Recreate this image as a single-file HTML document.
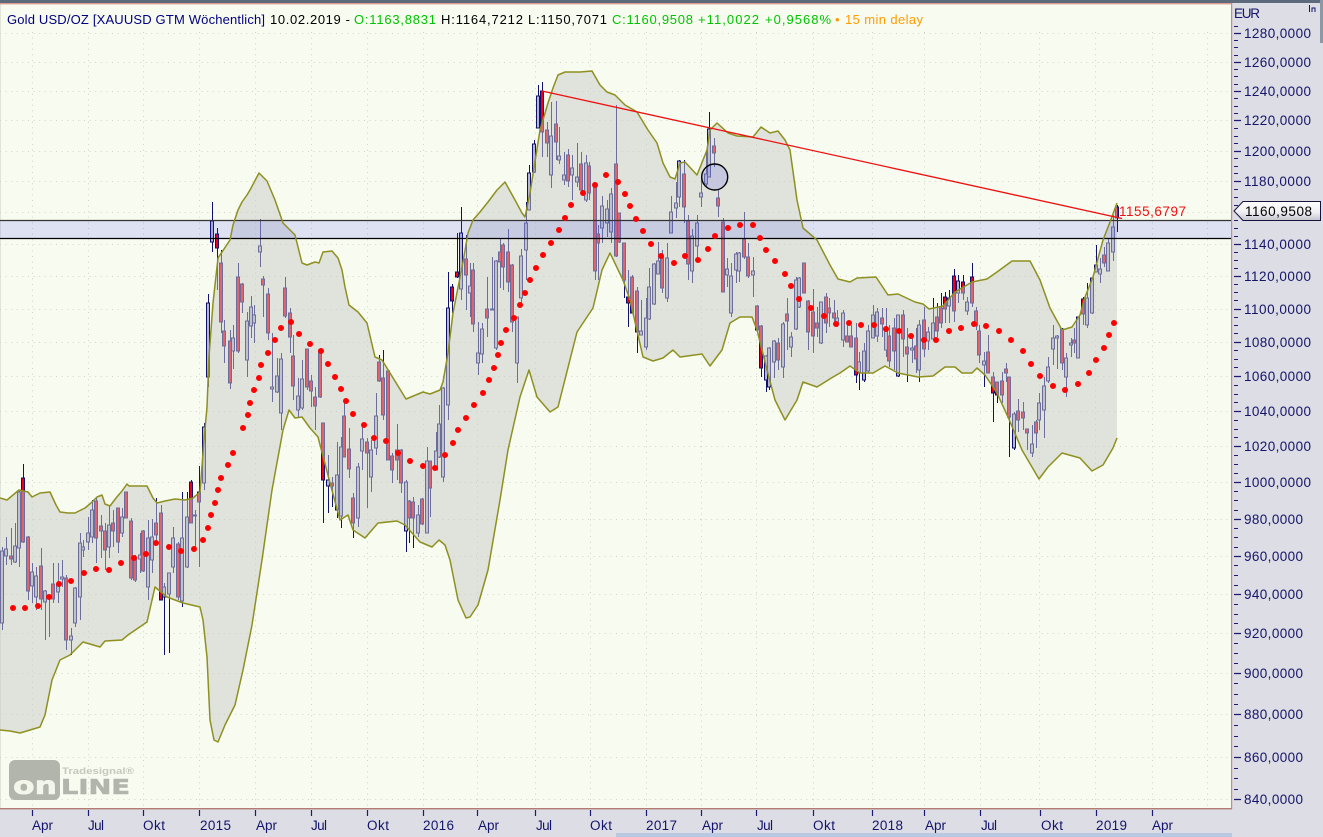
<!DOCTYPE html>
<html lang="de"><head><meta charset="utf-8"><title>Gold USD/OZ</title>
<style>html,body{margin:0;padding:0;background:#dddde5}svg{display:block}text{font-family:"Liberation Sans",sans-serif}</style></head>
<body>
<svg xmlns="http://www.w3.org/2000/svg" width="1323" height="837" viewBox="0 0 1323 837">
<rect width="1323" height="837" fill="#dddde5"/>
<rect x="616" y="833" width="616" height="4" fill="#b9c9e2"/>
<rect width="1323" height="3" fill="#5d6a7b"/>
<rect x="1320" y="0" width="3" height="43" fill="#8b98a6"/>
<rect x="0" y="4" width="1232" height="804" fill="#f8fbf0"/>
<rect x="0" y="4" width="1" height="804" fill="#e2e4da"/>
<!-- grid -->
<g stroke="#d2d4c8" stroke-width="1" stroke-dasharray="1 4.6" fill="none">
<path d="M0 33.5H1231M0 62.5H1231M0 91.5H1231M0 120.5H1231M0 151.5H1231M0 181.5H1231M0 212.5H1231M0 244.5H1231M0 276.5H1231M0 309.5H1231M0 342.5H1231M0 376.5H1231M0 411.5H1231M0 446.5H1231M0 482.5H1231M0 519.5H1231M0 556.5H1231M0 594.5H1231M0 633.5H1231M0 673.5H1231M0 714.5H1231M0 757.5H1231M0 799.5H1231"/>
<path d="M32.5 32V808M88.5 32V808M143.5 32V808M199.5 32V808M255.5 32V808M311.5 32V808M367.5 32V808M423.5 32V808M477.5 32V808M535.5 32V808M590.5 32V808M646.5 32V808M701.5 32V808M756.5 32V808M813.5 32V808M872.5 32V808M924.5 32V808M980.5 32V808M1039.5 32V808M1095.5 32V808M1152.5 32V808M1207.5 32V808"/>
</g>
<!-- logo -->
<g>
<rect x="9" y="760" width="51" height="40" rx="6" fill="#b1b5ab"/>
<text x="13" y="794" font-size="25" font-weight="700" fill="#f4f6ec" stroke="#f4f6ec" stroke-width=".6" textLength="44" lengthAdjust="spacingAndGlyphs" style="font-family:'DejaVu Sans',sans-serif">on</text>
<text x="61" y="794" font-size="20" font-weight="700" fill="#b1b5ab" stroke="#b1b5ab" stroke-width=".6" textLength="69" lengthAdjust="spacingAndGlyphs" style="font-family:'DejaVu Sans',sans-serif">LINE</text>
<text x="62" y="774" font-size="9.5" font-weight="700" fill="#c5c8bd" textLength="72" lengthAdjust="spacingAndGlyphs">Tradesignal®</text>
</g>
<!-- candles -->
<path transform="translate(.5 0)" fill="none" stroke="#10106e" stroke-width="1" d="M2 547V630M6 537V565M11 528V565M15 523V563M19 490V567M23 464V543M28 536V600M32 563V603M36 567V610M41 548V610M45 590V640M49 595V637M53 563V603M58 563V603M62 560V587M66 575V650M71 628V655M75 587V627M80 533V620M83 540V557M88 517V550M92 500V543M96 498V563M101 515V558M105 523V570M109 505V558M113 510V547M118 508V553M122 508V537M126 492V518M131 518V580M135 555V582M140 533V573M143 530V572M148 520V600M152 519V573M156 498V543M161 505V600M164 583V655M169 573V653M173 527V573M178 542V600M182 492V607M187 492V568M191 480V523M195 510V547M199 466V567M204 423V490M208 294V387M212 202V252M217 228V290M221 250V333M224 320V363M230 330V389M233 325V369M238 263V353M242 283V313M247 312V377M251 296V338M254 305V343M260 219V267M263 276V317M268 288V340M272 333V402M277 358V393M281 353V430M285 277V318M290 308V353M293 335V400M298 378V417M302 360V410M307 349V390M311 375V407M315 387V430M320 349V398M323 423V523M328 455V513M332 477V507M337 442V518M341 437V528M344 400V457M349 428V478M353 493V538M358 463V527M362 423V470M367 438V508M371 440V492M376 393V455M379 355V382M383 350V420M388 370V460M392 453V483M397 424V480M401 449V493M406 480V552M409 500V543M413 497V548M418 505V537M422 498V525M427 447V533M430 461V517M436 432V470M439 405V458M443 387V482M448 272V420M452 284V313M457 233V278M461 207V300M466 235V310M470 263V317M473 263V332M478 322V375M482 323V363M487 277V337M492 257V310M496 260V350M500 238V288M503 243V290M508 229V292M512 264V332M517 317V383M521 249V303M526 202V280M529 165V210M534 140V173M538 85V128M542 82V157M547 122V157M551 102V188M556 101V160M559 127V164M564 152V185M568 149V187M572 155V200M577 143V187M581 152V195M586 155V202M589 162V200M595 183V280M598 225V280M602 196V243M607 200V237M611 188V243M616 105V257M619 213V243M624 243V298M628 270V327M632 275V313M637 287V353M641 300V335M646 298V350M649 268V320M654 263V305M658 242V274M662 250V293M667 243V302M671 196V233M676 182V218M679 160V207M684 160V223M688 215V280M692 229V283M697 215V262M701 177V207M706 150V187M709 112V177M714 138V167M718 190V217M723 218V292M727 258V287M731 263V317M736 252V283M739 252V282M744 212V259M748 243V278M753 257V297M757 305V332M761 325V377M766 355V392M769 347V390M774 340V378M778 338V370M783 322V378M787 298V350M791 332V357M796 277V330M799 277V308M804 263V293M808 300V350M813 289V353M817 307V337M821 302V344M826 293V333M829 298V327M834 300V325M837 310V327M843 310V347M847 322V342M851 325V347M856 323V383M859 352V390M864 343V382M868 325V373M873 305V338M877 308V342M882 308V337M886 308V357M889 325V367M894 318V370M898 315V377M903 310V357M907 328V382M912 335V363M916 328V373M919 320V382M924 307V357M928 327V350M933 298V340M937 303V337M941 293V328M945 292V323M949 290V323M954 269V322M958 275V303M963 275V300M967 297V315M972 263V307M976 307V330M979 325V363M984 352V387M988 335V373M993 372V422M997 382V403M1002 372V403M1006 363V382M1009 377V457M1014 412V450M1018 399V432M1023 402V430M1027 429V450M1032 425V457M1036 420V448M1039 393V430M1044 377V438M1048 357V383M1053 325V365M1057 335V369M1062 328V370M1066 353V397M1071 338V357M1074 328V353M1078 317V358M1083 297V325M1087 283V328M1092 278V314M1096 245V272M1100 258V283M1104 247V267M1108 238V270M1113 215V261M1117 205V232"/>
<path fill="#b6b8d2" stroke="#10106e" stroke-width="1" d="M.5 551h3v72h-3zM4.5 549h3v7h-3zM13.5 546h3v16h-3zM17.5 492h3v56h-3zM30.5 572h3v14h-3zM34.5 576h3v21h-3zM43.5 591h3v11h-3zM47.5 595h3v3h-3zM56.5 585h3v7h-3zM60.5 577h3v2h-3zM69.5 636h3v4h-3zM73.5 588h3v35h-3zM78.5 543h3v54h-3zM81.5 547h3v3h-3zM86.5 533h3v9h-3zM90.5 510h3v27h-3zM107.5 525h3v22h-3zM120.5 517h3v16h-3zM138.5 555h3v4h-3zM146.5 538h3v49h-3zM150.5 537h3v23h-3zM162.5 587h3v10h-3zM167.5 573h3v21h-3zM171.5 538h3v29h-3zM180.5 538h3v63h-3zM185.5 517h3v50h-3zM193.5 515h3v1h-3zM202.5 427h3v56h-3zM206.5 303h3v74h-3zM210.5 221h3v21h-3zM231.5 338h3v13h-3zM245.5 321h3v39h-3zM249.5 307h3v19h-3zM252.5 315h3v8h-3zM258.5 246h3v6h-3zM270.5 387h3v2h-3zM275.5 376h3v16h-3zM279.5 359h3v54h-3zM296.5 396h3v14h-3zM300.5 379h3v29h-3zM326.5 480h3v6h-3zM335.5 475h3v35h-3zM339.5 447h3v69h-3zM356.5 467h3v51h-3zM360.5 439h3v12h-3zM369.5 450h3v27h-3zM374.5 416h3v32h-3zM404.5 482h3v49h-3zM416.5 515h3v18h-3zM425.5 461h3v72h-3zM434.5 451h3v19h-3zM437.5 424h3v33h-3zM441.5 388h3v89h-3zM446.5 308h3v97h-3zM459.5 233h3v56h-3zM468.5 286h3v7h-3zM476.5 353h3v10h-3zM480.5 329h3v25h-3zM490.5 309h3v1h-3zM494.5 261h3v87h-3zM515.5 317h3v46h-3zM519.5 256h3v42h-3zM524.5 223h3v27h-3zM527.5 173h3v37h-3zM532.5 144h3v28h-3zM536.5 96h3v32h-3zM549.5 136h3v39h-3zM557.5 156h3v4h-3zM562.5 175h3v5h-3zM570.5 168h3v7h-3zM575.5 177h3v5h-3zM584.5 163h3v37h-3zM600.5 206h3v22h-3zM605.5 209h3v14h-3zM609.5 194h3v38h-3zM639.5 331h3v4h-3zM644.5 318h3v29h-3zM647.5 287h3v32h-3zM652.5 264h3v40h-3zM656.5 261h3v13h-3zM665.5 258h3v40h-3zM669.5 212h3v21h-3zM674.5 203h3v5h-3zM677.5 161h3v36h-3zM690.5 236h3v35h-3zM695.5 223h3v23h-3zM699.5 193h3v4h-3zM704.5 174h3v10h-3zM707.5 129h3v48h-3zM725.5 269h3v6h-3zM729.5 276h3v37h-3zM734.5 254h3v16h-3zM737.5 253h3v18h-3zM751.5 271h3v4h-3zM764.5 356h3v24h-3zM767.5 348h3v39h-3zM772.5 341h3v21h-3zM781.5 324h3v43h-3zM789.5 337h3v10h-3zM794.5 280h3v49h-3zM797.5 278h3v29h-3zM819.5 302h3v41h-3zM835.5 318h3v7h-3zM841.5 313h3v27h-3zM857.5 362h3v11h-3zM862.5 351h3v29h-3zM866.5 331h3v40h-3zM871.5 315h3v23h-3zM875.5 312h3v24h-3zM884.5 328h3v22h-3zM896.5 315h3v61h-3zM910.5 348h3v2h-3zM917.5 325h3v45h-3zM926.5 332h3v9h-3zM931.5 323h3v16h-3zM947.5 298h3v8h-3zM956.5 281h3v12h-3zM965.5 302h3v9h-3zM982.5 361h3v4h-3zM1012.5 414h3v34h-3zM1030.5 444h3v9h-3zM1037.5 403h3v17h-3zM1042.5 386h3v24h-3zM1046.5 367h3v14h-3zM1051.5 338h3v11h-3zM1055.5 336h3v2h-3zM1064.5 358h3v19h-3zM1069.5 343h3v2h-3zM1076.5 317h3v41h-3zM1085.5 298h3v27h-3zM1090.5 278h3v35h-3zM1094.5 265h3v7h-3zM1098.5 269h3v5h-3zM1106.5 243h3v28h-3zM1111.5 227h3v25h-3z"/>
<path fill="#f00018" stroke="#10106e" stroke-width="1" d="M9.5 556h3v3h-3zM21.5 478h3v64h-3zM26.5 537h3v54h-3zM39.5 566h3v33h-3zM51.5 584h3v15h-3zM64.5 578h3v62h-3zM94.5 501h3v37h-3zM99.5 526h3v5h-3zM103.5 531h3v19h-3zM111.5 523h3v8h-3zM116.5 508h3v34h-3zM124.5 492h3v26h-3zM129.5 521h3v57h-3zM133.5 557h3v23h-3zM141.5 531h3v40h-3zM154.5 523h3v12h-3zM159.5 513h3v87h-3zM176.5 544h3v53h-3zM189.5 482h3v41h-3zM197.5 492h3v10h-3zM215.5 234h3v14h-3zM219.5 263h3v59h-3zM222.5 331h3v15h-3zM228.5 341h3v42h-3zM236.5 277h3v74h-3zM240.5 284h3v18h-3zM261.5 279h3v6h-3zM266.5 294h3v39h-3zM283.5 288h3v28h-3zM288.5 313h3v24h-3zM291.5 356h3v30h-3zM305.5 349h3v38h-3zM309.5 381h3v10h-3zM313.5 397h3v9h-3zM318.5 350h3v47h-3zM321.5 423h3v57h-3zM330.5 483h3v3h-3zM342.5 416h3v41h-3zM347.5 449h3v20h-3zM351.5 498h3v25h-3zM365.5 442h3v11h-3zM377.5 362h3v19h-3zM381.5 378h3v37h-3zM386.5 371h3v89h-3zM390.5 456h3v14h-3zM395.5 450h3v10h-3zM399.5 450h3v33h-3zM407.5 501h3v17h-3zM411.5 502h3v16h-3zM420.5 499h3v25h-3zM428.5 461h3v27h-3zM450.5 287h3v14h-3zM455.5 272h3v5h-3zM464.5 259h3v16h-3zM471.5 270h3v54h-3zM485.5 309h3v9h-3zM498.5 252h3v10h-3zM501.5 245h3v22h-3zM506.5 252h3v30h-3zM510.5 265h3v57h-3zM540.5 91h3v41h-3zM545.5 130h3v13h-3zM554.5 124h3v18h-3zM566.5 155h3v26h-3zM579.5 164h3v26h-3zM587.5 166h3v27h-3zM593.5 184h3v87h-3zM596.5 234h3v9h-3zM614.5 164h3v92h-3zM617.5 213h3v29h-3zM622.5 243h3v37h-3zM626.5 297h3v6h-3zM630.5 277h3v36h-3zM635.5 291h3v41h-3zM660.5 257h3v31h-3zM682.5 174h3v33h-3zM686.5 221h3v43h-3zM712.5 146h3v7h-3zM716.5 198h3v8h-3zM721.5 222h3v70h-3zM742.5 239h3v18h-3zM746.5 257h3v19h-3zM755.5 306h3v24h-3zM759.5 326h3v42h-3zM776.5 343h3v17h-3zM785.5 314h3v7h-3zM802.5 263h3v30h-3zM806.5 301h3v31h-3zM811.5 312h3v24h-3zM815.5 323h3v5h-3zM824.5 297h3v26h-3zM827.5 308h3v5h-3zM832.5 313h3v5h-3zM845.5 336h3v6h-3zM849.5 336h3v11h-3zM854.5 338h3v37h-3zM880.5 318h3v6h-3zM887.5 336h3v25h-3zM892.5 328h3v23h-3zM901.5 315h3v24h-3zM905.5 347h3v7h-3zM914.5 346h3v13h-3zM922.5 320h3v29h-3zM935.5 317h3v14h-3zM939.5 308h3v15h-3zM943.5 297h3v12h-3zM952.5 276h3v35h-3zM961.5 282h3v11h-3zM970.5 277h3v26h-3zM974.5 311h3v15h-3zM977.5 331h3v24h-3zM986.5 352h3v21h-3zM991.5 377h3v16h-3zM995.5 382h3v13h-3zM1000.5 381h3v14h-3zM1004.5 369h3v4h-3zM1007.5 377h3v40h-3zM1016.5 411h3v9h-3zM1021.5 412h3v6h-3zM1025.5 429h3v4h-3zM1034.5 422h3v11h-3zM1060.5 329h3v34h-3zM1072.5 340h3v3h-3zM1081.5 299h3v15h-3zM1102.5 255h3v8h-3zM1115.5 207h3v11h-3z"/>
<!-- band fill -->
<path fill="#c8c9c8" fill-opacity=".5" d="M0 498L7 500L19 490L28 492L32 497L40 493L50 492L56 505L60 512L68 513L75 513L85 508L91 503L97 497L102 495L105 504L110 506L116 498L122 491L127 484L129 486L147 486L153 498L157 503L165 501L175 499L185 500L193 498L200 492L204 440L207 407L209 357L213 303L218 258L230 240L233 225L238 210L242 202L247 195L250 190L259 173L267 181L275 200L283 223L295 235L302 263L307 265L315 262L319 263L323 252L332 251L338 258L342 270L345 287L349 305L358 312L367 323L375 357L382 360L390 373L406 399L423 392L430 394L440 390L443 382L448 353L453 313L463 262L468 233L473 220L480 212L488 202L497 190L505 182L515 200L522 213L525 217L530 193L540 130L548 103L553 88L558 75L565 72L580 72L592 71L600 85L607 92L615 95L625 105L637 112L648 130L657 143L663 163L670 177L675 179L680 163L685 162L697 175L707 150L710 130L717 123L728 133L737 136L753 137L761 127L770 133L778 131L785 140L790 150L797 200L803 228L817 240L830 265L838 279L850 282L857 278L876 277L888 295L898 294L915 302L923 304L929 309L943 306L955 292L972 282L987 279L997 272L1012 261L1030 261L1040 280L1050 308L1062 330L1072 327L1080 315L1085 297L1093 277L1103 240L1110 222L1117 203L1117 438L1113 448L1103 465L1092 471L1080 458L1062 453L1048 467L1039 479L1022 450L1008 417L997 393L985 375L977 368L972 373L962 373L955 367L945 367L933 376L918 377L898 373L885 366L873 373L860 373L850 366L840 373L833 377L817 387L803 382L797 400L785 420L775 400L767 370L757 330L752 317L740 317L730 323L722 350L710 366L702 354L680 357L673 350L663 358L653 361L643 357L630 300L623 280L610 253L602 270L593 308L577 332L558 407L550 412L537 397L529 370L520 397L508 450L500 500L488 570L478 605L470 617L466 618L458 600L450 560L445 545L439 540L432 547L420 542L405 525L397 521L378 523L365 538L353 530L348 515L340 520L330 483L318 437L310 428L302 417L295 418L289 410L283 430L272 490L262 560L252 625L243 670L235 705L225 725L218 742L214 740L210 720L207 657L203 620L200 607L183 603L167 597L155 587L147 622L128 635L122 640L105 641L100 647L83 642L70 655L60 660L52 680L45 715L40 727L30 730L20 733L10 731L0 730Z"/>
<!-- zone -->
<rect x="0" y="220" width="1231" height="19" fill="#3c46fa" fill-opacity=".14"/>
<path d="M0 220.5H1231" stroke="#333" stroke-width="1.2"/>
<path d="M0 238.5H1231" stroke="#000" stroke-width="1.2"/>
<!-- band lines -->
<g fill="none" stroke="#8e9020" stroke-width="1.5" stroke-linejoin="round">
<path d="M0 498L7 500L19 490L28 492L32 497L40 493L50 492L56 505L60 512L68 513L75 513L85 508L91 503L97 497L102 495L105 504L110 506L116 498L122 491L127 484L129 486L147 486L153 498L157 503L165 501L175 499L185 500L193 498L200 492L204 440L207 407L209 357L213 303L218 258L230 240L233 225L238 210L242 202L247 195L250 190L259 173L267 181L275 200L283 223L295 235L302 263L307 265L315 262L319 263L323 252L332 251L338 258L342 270L345 287L349 305L358 312L367 323L375 357L382 360L390 373L406 399L423 392L430 394L440 390L443 382L448 353L453 313L463 262L468 233L473 220L480 212L488 202L497 190L505 182L515 200L522 213L525 217L530 193L540 130L548 103L553 88L558 75L565 72L580 72L592 71L600 85L607 92L615 95L625 105L637 112L648 130L657 143L663 163L670 177L675 179L680 163L685 162L697 175L707 150L710 130L717 123L728 133L737 136L753 137L761 127L770 133L778 131L785 140L790 150L797 200L803 228L817 240L830 265L838 279L850 282L857 278L876 277L888 295L898 294L915 302L923 304L929 309L943 306L955 292L972 282L987 279L997 272L1012 261L1030 261L1040 280L1050 308L1062 330L1072 327L1080 315L1085 297L1093 277L1103 240L1110 222L1117 203"/>
<path d="M1117 438L1113 448L1103 465L1092 471L1080 458L1062 453L1048 467L1039 479L1022 450L1008 417L997 393L985 375L977 368L972 373L962 373L955 367L945 367L933 376L918 377L898 373L885 366L873 373L860 373L850 366L840 373L833 377L817 387L803 382L797 400L785 420L775 400L767 370L757 330L752 317L740 317L730 323L722 350L710 366L702 354L680 357L673 350L663 358L653 361L643 357L630 300L623 280L610 253L602 270L593 308L577 332L558 407L550 412L537 397L529 370L520 397L508 450L500 500L488 570L478 605L470 617L466 618L458 600L450 560L445 545L439 540L432 547L420 542L405 525L397 521L378 523L365 538L353 530L348 515L340 520L330 483L318 437L310 428L302 417L295 418L289 410L283 430L272 490L262 560L252 625L243 670L235 705L225 725L218 742L214 740L210 720L207 657L203 620L200 607L183 603L167 597L155 587L147 622L128 635L122 640L105 641L100 647L83 642L70 655L60 660L52 680L45 715L40 727L30 730L20 733L10 731L0 730"/>
</g>
<!-- trend -->
<path d="M542 91L1122 218.5" stroke="#f01010" stroke-width="1.3" fill="none"/>
<!-- SAR dots -->
<g fill="none" stroke="#ff0000" stroke-width="6" stroke-linecap="round">
<path d="M13 608h.01M25 608h.01M38 606h.01M49 597h.01M59 584h.01M71 581h.01M84 573h.01M96 569h.01M109 570h.01M121 563h.01M134 558h.01M146 554h.01M156 543h.01M169 547h.01M181 551h.01M194 549h.01M203 540h.01M208 528h.01M211 515h.01M215 503h.01M218 490h.01M221 478h.01M228 465h.01M233 453h.01M243 428h.01M248 415h.01M250 403h.01M254 390h.01M259 378h.01M261 365h.01M268 353h.01M275 340h.01M281 328h.01M291 322h.01M299 334h.01M310 344h.01M321 351h.01M328 364h.01M335 377h.01M341 389h.01M346 401h.01M353 414h.01M364 425h.01M374 438h.01M386 441h.01M398 453h.01M410 461h.01M423 466h.01M435 468h.01M445 455h.01M453 443h.01M458 430h.01M466 418h.01M474 405h.01M483 393h.01M489 380h.01M494 368h.01M498 355h.01M501 343h.01M506 330h.01M514 318h.01M520 305h.01M525 293h.01M530 280h.01M536 268h.01M543 255h.01M551 243h.01M559 230h.01M565 218h.01M571 205h.01M583 193h.01M595 185h.01M606 175h.01M618 182h.01M625 194h.01M630 206h.01M636 219h.01M643 231h.01M651 244h.01M661 256h.01M674 263h.01M685 256h.01M698 260h.01M708 249h.01M715 236h.01M728 228h.01M740 225h.01M753 225h.01M760 238h.01M766 250h.01M775 261h.01M785 274h.01M791 286h.01M799 299h.01M811 308h.01M824 316h.01M836 324h.01M849 323h.01M861 325h.01M874 325h.01M886 329h.01M899 331h.01M911 336h.01M924 340h.01M936 340h.01M949 331h.01M961 328h.01M974 324h.01M986 326h.01M999 331h.01M1011 340h.01M1023 351h.01M1031 364h.01M1040 376h.01M1053 386h.01M1065 390h.01M1078 384h.01M1089 373h.01M1096 360h.01M1104 348h.01M1109 335h.01M1114 323h.01"/>
</g>
<!-- circle -->
<circle cx="714.7" cy="177" r="13" fill="#3c46fa" fill-opacity=".16" stroke="#000" stroke-width="1.4"/>
<!-- frame -->
<rect x="0" y="3" width="1232" height="1.4" fill="#dc9c92"/>
<rect x="1231" y="3" width="1.2" height="806" fill="#c98b86"/>
<rect x="0" y="808" width="1232" height="1.4" fill="#b27c74"/>
<!-- right axis ticks -->
<path stroke="#1a1a70" stroke-width="1.2" fill="none" d="M1234 33.5h7M1234 62.5h7M1234 91.5h7M1234 120.5h7M1234 151.5h7M1234 181.5h7M1234 244.5h7M1234 276.5h7M1234 309.5h7M1234 342.5h7M1234 376.5h7M1234 411.5h7M1234 446.5h7M1234 482.5h7M1234 519.5h7M1234 556.5h7M1234 594.5h7M1234 633.5h7M1234 673.5h7M1234 714.5h7M1234 757.5h7M1234 799.5h7"/>
<path stroke="#1a1a70" stroke-width="1" fill="none" d="M1234 26.5h4M1234 40.5h4M1234 47.5h4M1234 55.5h4M1234 69.5h4M1234 76.5h4M1234 84.5h4M1234 98.5h4M1234 106.5h4M1234 113.5h4M1234 128.5h4M1234 136.5h4M1234 143.5h4M1234 158.5h4M1234 166.5h4M1234 173.5h4M1234 189.5h4M1234 197.5h4M1234 205.5h4M1234 220.5h4M1234 228.5h4M1234 236.5h4M1234 252.5h4M1234 260.5h4M1234 268.5h4M1234 284.5h4M1234 292.5h4M1234 300.5h4M1234 317.5h4M1234 325.5h4M1234 333.5h4M1234 350.5h4M1234 359.5h4M1234 367.5h4M1234 385.5h4M1234 394.5h4M1234 402.5h4M1234 420.5h4M1234 429.5h4M1234 437.5h4M1234 455.5h4M1234 464.5h4M1234 473.5h4M1234 491.5h4M1234 500.5h4M1234 510.5h4M1234 528.5h4M1234 537.5h4M1234 547.5h4M1234 565.5h4M1234 575.5h4M1234 585.5h4M1234 604.5h4M1234 614.5h4M1234 623.5h4M1234 643.5h4M1234 653.5h4M1234 663.5h4M1234 683.5h4M1234 694.5h4M1234 704.5h4M1234 725.5h4M1234 736.5h4M1234 746.5h4M1234 768.5h4M1234 778.5h4M1234 789.5h4"/>
<!-- bottom ticks -->
<path stroke="#1a1a70" stroke-width="1.2" fill="none" d="M32.5 810v6M88.5 810v6M143.5 810v6M199.5 810v6M255.5 810v6M311.5 810v6M367.5 810v6M423.5 810v6M477.5 810v6M535.5 810v6M590.5 810v6M646.5 810v6M701.5 810v6M756.5 810v6M813.5 810v6M872.5 810v6M924.5 810v6M980.5 810v6M1040.5 810v6M1096.5 810v6M1152.5 810v6"/>
<!-- title -->
<g font-size="13">
<text x="7" y="24" fill="#000080" textLength="258">Gold USD/OZ [XAUUSD GTM Wöchentlich]</text>
<text x="270" y="24" fill="#000" textLength="80">10.02.2019 -</text>
<text x="354" y="24" fill="#00c400" textLength="82">O:1163,8831</text>
<text x="441" y="24" fill="#000" textLength="82">H:1164,7212</text>
<text x="528" y="24" fill="#000" textLength="79">L:1150,7071</text>
<text x="612" y="24" fill="#00c400" textLength="81">C:1160,9508</text>
<text x="698" y="24" fill="#00c400" textLength="61">+11,0022</text>
<text x="765" y="24" fill="#00c400" textLength="66">+0,9568%</text>
<text x="835" y="24" fill="#ff9c00">•</text>
<text x="845" y="24" fill="#ff9c00" textLength="78">15 min delay</text>
</g>
<!-- right axis labels -->
<g font-size="13.5" fill="#14146a">
<text x="1234" y="18" textLength="26">EUR</text>
<text x="1244" y="38" textLength="67">1280,0000</text>
<text x="1244" y="67" textLength="67">1260,0000</text>
<text x="1244" y="96" textLength="67">1240,0000</text>
<text x="1244" y="125" textLength="67">1220,0000</text>
<text x="1244" y="156" textLength="67">1200,0000</text>
<text x="1244" y="186" textLength="67">1180,0000</text>
<text x="1244" y="249" textLength="67">1140,0000</text>
<text x="1244" y="281" textLength="67">1120,0000</text>
<text x="1244" y="314" textLength="67">1100,0000</text>
<text x="1244" y="347" textLength="67">1080,0000</text>
<text x="1244" y="381" textLength="67">1060,0000</text>
<text x="1244" y="416" textLength="67">1040,0000</text>
<text x="1244" y="451" textLength="67">1020,0000</text>
<text x="1244" y="487" textLength="67">1000,0000</text>
<text x="1244" y="524" textLength="59">980,0000</text>
<text x="1244" y="561" textLength="59">960,0000</text>
<text x="1244" y="599" textLength="59">940,0000</text>
<text x="1244" y="638" textLength="59">920,0000</text>
<text x="1244" y="678" textLength="59">900,0000</text>
<text x="1244" y="719" textLength="59">880,0000</text>
<text x="1244" y="762" textLength="59">860,0000</text>
<text x="1244" y="804" textLength="59">840,0000</text>
</g>
<!-- top-right glyph -->
<path d="M1309.5 5v7M1312 7.5v4.5M1312 8h3v4" stroke="#14146a" stroke-width="1" fill="none"/>
<!-- bottom labels -->
<g font-size="13.5" fill="#14146a">
<text x="32" y="830" textLength="21">Apr</text>
<text x="88" y="830" textLength="16">Jul</text>
<text x="143" y="830" textLength="22">Okt</text>
<text x="200" y="830" textLength="31">2015</text>
<text x="256" y="830" textLength="21">Apr</text>
<text x="311" y="830" textLength="16">Jul</text>
<text x="367" y="830" textLength="22">Okt</text>
<text x="423" y="830" textLength="31">2016</text>
<text x="478" y="830" textLength="21">Apr</text>
<text x="536" y="830" textLength="16">Jul</text>
<text x="590" y="830" textLength="22">Okt</text>
<text x="646" y="830" textLength="31">2017</text>
<text x="702" y="830" textLength="21">Apr</text>
<text x="757" y="830" textLength="16">Jul</text>
<text x="813" y="830" textLength="22">Okt</text>
<text x="872" y="830" textLength="31">2018</text>
<text x="925" y="830" textLength="21">Apr</text>
<text x="981" y="830" textLength="16">Jul</text>
<text x="1041" y="830" textLength="22">Okt</text>
<text x="1096" y="830" textLength="31">2019</text>
<text x="1152" y="830" textLength="21">Apr</text>
</g>
<!-- trend label -->
<text x="1119" y="216" font-size="13.5" fill="#f01010" textLength="67">1155,6797</text>
<!-- price tag -->
<defs><linearGradient id="tag" x1="0" y1="0" x2="0" y2="1"><stop offset="0" stop-color="#ffffff"/><stop offset=".55" stop-color="#f0f0f4"/><stop offset="1" stop-color="#c4c4d0"/></linearGradient></defs>
<path d="M1234 211L1243 201.5H1320.5V220.5H1243Z" fill="url(#tag)" stroke="#14143c" stroke-width="1"/>
<text x="1245" y="216" font-size="13.5" fill="#000" textLength="67">1160,9508</text>
</svg>
</body></html>
